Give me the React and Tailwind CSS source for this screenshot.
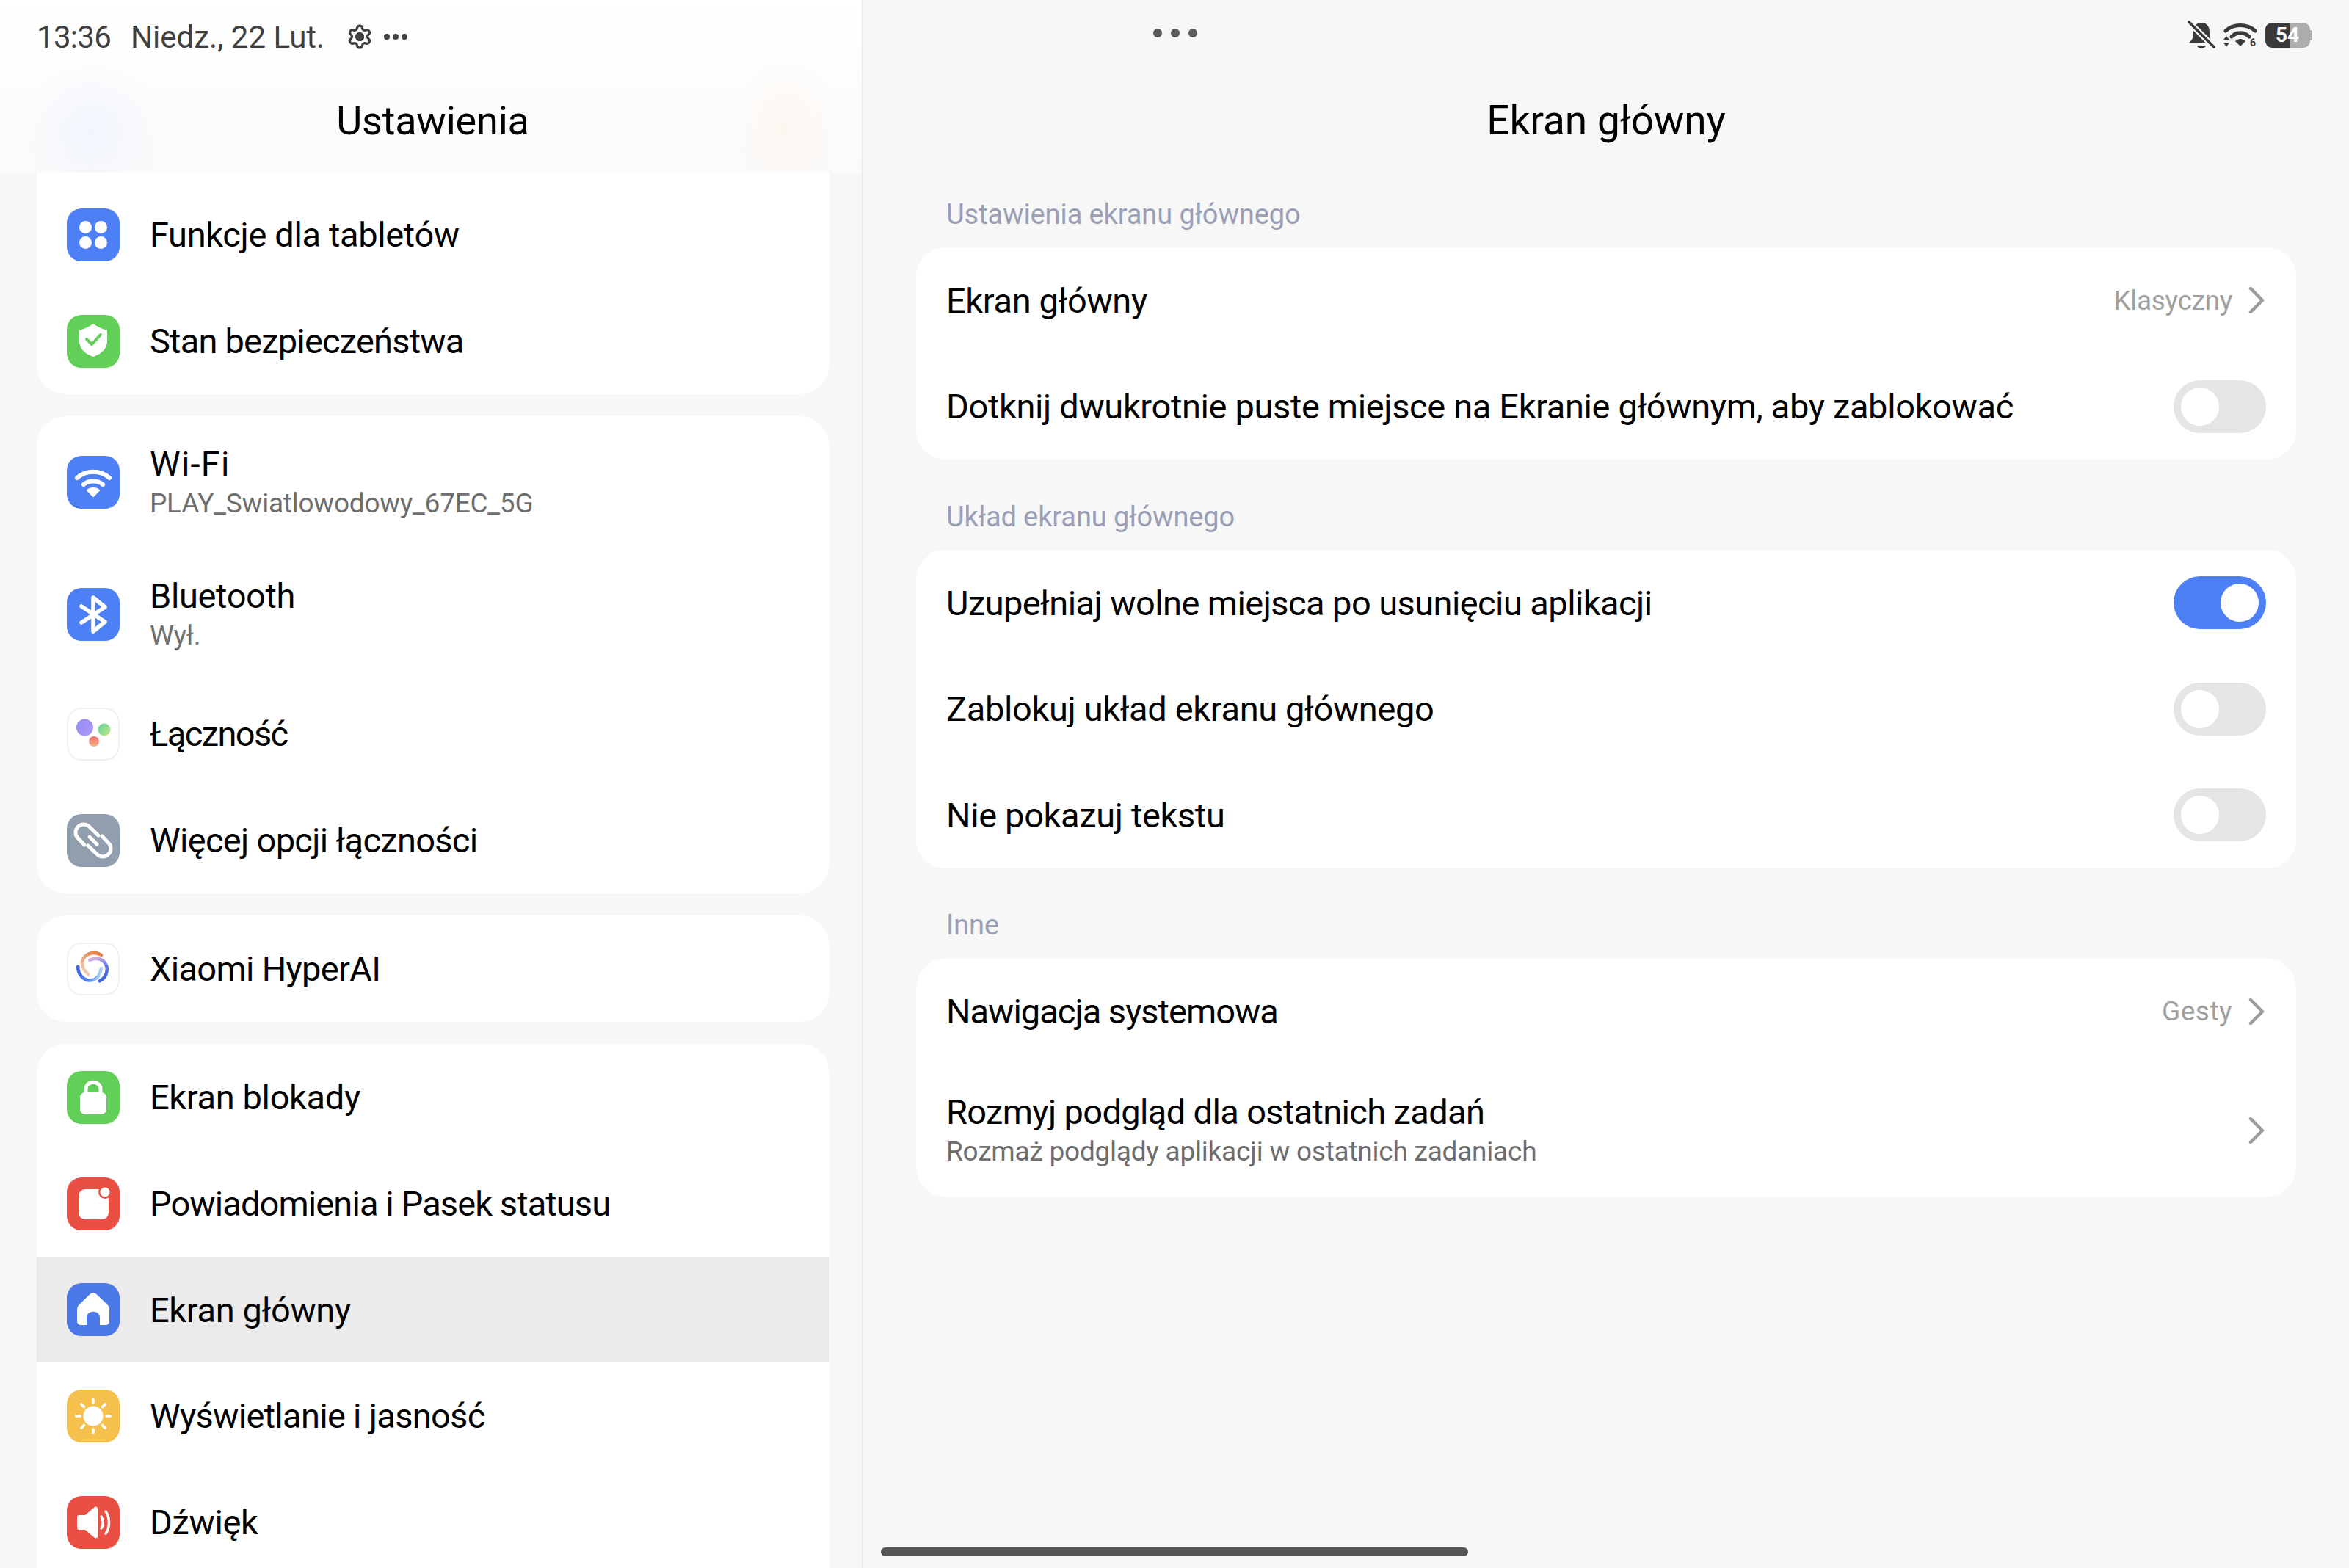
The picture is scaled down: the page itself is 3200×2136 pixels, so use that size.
import React from 'react';
import { Settings } from 'lucide-react';

const font = 'font-["Roboto","Noto_Sans",sans-serif]';

function Tile({ bg, children, bordered }) {
  return (
    <div className={`w-[72px] h-[72px] shrink-0 rounded-[20px] flex items-center justify-center ${bg} ${bordered ? 'border-2 border-[#f1f1f1]' : ''}`}>
      <svg width="72" height="72" viewBox="0 0 72 72" fill="none" className="shrink-0">{children}</svg>
    </div>
  );
}

const blade = 'M47 17 C38 11 24 14 21 26 C20 33 24 39 29 43';

const icons = {
  apps: (
    <Tile bg="bg-[#4d80f5]">
      <rect x="17" y="17" width="17" height="17" rx="8.5" fill="#fff" />
      <rect x="38" y="17" width="17" height="17" rx="8.5" fill="#fff" />
      <rect x="17" y="38" width="17" height="17" rx="8.5" fill="#fff" />
      <rect x="38" y="38" width="17" height="17" rx="8.5" fill="#fff" />
    </Tile>
  ),
  shield: (
    <Tile bg="bg-[#62cf59]">
      <path d="M36 12 C41 16 48 19 55 21 V36 C55 47 45 54 36 57 C27 54 17 47 17 36 V21 C24 19 31 16 36 12 Z" fill="#fff" />
      <path d="M27 33 L34 40 L46 27" stroke="#62cf59" strokeWidth="4" strokeLinecap="round" strokeLinejoin="round" />
    </Tile>
  ),
  wifi: (
    <Tile bg="bg-[#4d80f5]">
      <path d="M14 30 C26 19 46 19 58 30" stroke="#fff" strokeWidth="6" strokeLinecap="round" />
      <path d="M23 39 C30 33 42 33 49 39" stroke="#fff" strokeWidth="6" strokeLinecap="round" />
      <path d="M36 55 L28 47 C32 43 40 43 44 47 Z" fill="#fff" stroke="#fff" strokeWidth="2" strokeLinejoin="round" />
    </Tile>
  ),
  bluetooth: (
    <Tile bg="bg-[#4d80f5]">
      <path d="M20 25 L52 46 L36 59 V13 L52 26 L20 47" stroke="#fff" strokeWidth="5.5" strokeLinecap="round" strokeLinejoin="round" />
    </Tile>
  ),
  dots: (
    <Tile bg="bg-white" bordered>
      <defs>
        <linearGradient id="dotA" x1="0" y1="0" x2="1" y2="1"><stop offset="0" stopColor="#8f8cf6" /><stop offset="1" stopColor="#b39af5" /></linearGradient>
        <linearGradient id="dotB" x1="0" y1="0" x2="1" y2="1"><stop offset="0" stopColor="#5fd3a0" /><stop offset="1" stopColor="#c5e77f" /></linearGradient>
        <linearGradient id="dotC" x1="0" y1="0" x2="0" y2="1"><stop offset="0" stopColor="#f0686f" /><stop offset="1" stopColor="#f5b77c" /></linearGradient>
      </defs>
      <circle cx="24.5" cy="27" r="11.5" fill="url(#dotA)" />
      <circle cx="51" cy="30" r="8.5" fill="url(#dotB)" />
      <circle cx="37" cy="46" r="7" fill="url(#dotC)" />
    </Tile>
  ),
  link: (
    <Tile bg="bg-[#919eae]">
      <path d="M24 42 L15.2 32.8 A11 11 0 0 1 30.8 17.2 L43 29" stroke="#fff" strokeWidth="5" strokeLinecap="round" />
      <path d="M48 30 L56.8 39.2 A11 11 0 0 1 41.2 54.8 L29 43" stroke="#fff" strokeWidth="5" strokeLinecap="round" />
      <path d="M31 31 L41 41" stroke="#fff" strokeWidth="5" strokeLinecap="round" />
    </Tile>
  ),
  hyper: (
    <Tile bg="bg-white" bordered>
      <defs>
        <linearGradient id="bladeA" x1="1" y1="0" x2="0.3" y2="1"><stop offset="0" stopColor="#e0773c" /><stop offset="0.5" stopColor="#e9a06e" /><stop offset="1" stopColor="#f3cdb0" /></linearGradient>
        <linearGradient id="bladeB" x1="1" y1="0" x2="0.3" y2="1"><stop offset="0" stopColor="#3f5fe0" /><stop offset="0.55" stopColor="#5f78e8" /><stop offset="1" stopColor="#d4aed8" /></linearGradient>
        <linearGradient id="bladeC" x1="1" y1="0" x2="0.3" y2="1"><stop offset="0" stopColor="#3f5fe0" /><stop offset="0.55" stopColor="#4f86ec" /><stop offset="1" stopColor="#a9d4f7" /></linearGradient>
      </defs>
      <path d={blade} stroke="url(#bladeA)" strokeWidth="4.5" strokeLinecap="round" />
      <path d={blade} stroke="url(#bladeB)" strokeWidth="4.5" strokeLinecap="round" transform="rotate(120 35.7 34)" />
      <path d={blade} stroke="url(#bladeC)" strokeWidth="4.5" strokeLinecap="round" transform="rotate(240 35.7 34)" />
    </Tile>
  ),
  lock: (
    <Tile bg="bg-[#62cf59]">
      <path d="M26 32 V25 C26 12 46 12 46 25 V32" stroke="#fff" strokeWidth="5" />
      <rect x="18" y="29" width="36" height="30" rx="7" fill="#fff" />
    </Tile>
  ),
  notify: (
    <Tile bg="bg-[#e94f43]">
      <rect x="16" y="16" width="41" height="41" rx="9" fill="#fff" />
      <circle cx="52" cy="20" r="9" fill="#e94f43" />
      <circle cx="52" cy="20" r="6.5" fill="#fff" />
    </Tile>
  ),
  home: (
    <Tile bg="bg-[#4a78e6]">
      <path d="M36 13 C38 13 39 14 41 15.5 L55 29 C57 31 58 33 58 36 V51 C58 55 56 57 52 57 H45 V47 C45 36 27 36 27 47 V57 H20 C16 57 14 55 14 51 V36 C14 33 15 31 17 29 L31 15.5 C33 14 34 13 36 13 Z" fill="#fff" />
    </Tile>
  ),
  sun: (
    <Tile bg="bg-[#f5c04b]">
      <circle cx="36" cy="36" r="13.5" fill="#fff" />
      <path d="M36 13 V18 M36 54 V59 M13 36 H18 M54 36 H59 M20 20 L23.5 23.5 M48.5 48.5 L52 52 M52 20 L48.5 23.5 M23.5 48.5 L20 52" stroke="#fff" strokeWidth="3.6" strokeLinecap="round" />
    </Tile>
  ),
  sound: (
    <Tile bg="bg-[#e94f43]">
      <path d="M14 29 C14 27 15 26 17 26 H25 L38 15 C40 14 42 15 42 17 V55 C42 57 40 58 38 57 L25 46 H17 C15 46 14 45 14 43 Z" fill="#fff" />
      <path d="M47 28 C50 32 50 40 47 44" stroke="#fff" strokeWidth="3.5" strokeLinecap="round" />
      <path d="M53 21 C59 29 59 43 53 51" stroke="#fff" strokeWidth="3.5" strokeLinecap="round" />
    </Tile>
  ),
};

function RowText({ title, sub, track = 'tracking-[-0.36px]' }) {
  return (
    <div className={`flex flex-col ${sub ? 'pt-[2px]' : 'pt-[1px]'}`}>
      <div className={`text-[47px] leading-[56px] text-black ${track}`}>{title}</div>
      {sub && <div className="text-[37px] tracking-[-0.23px] leading-[52px] text-[#6e6e6e]">{sub}</div>}
    </div>
  );
}

function MenuRow({ icon, title, sub, active, tall, track }) {
  return (
    <div className={`flex items-center pl-[41px] gap-[41px] ${tall ? 'h-[180px]' : active ? 'h-[144px]' : 'h-[145px]'} ${active ? 'bg-[#ebebeb]' : ''}`}>
      {icons[icon]}
      <RowText title={title} sub={sub} track={track} />
    </div>
  );
}

function Toggle({ on }) {
  return (
    <div className={`w-[126px] h-[72px] rounded-full p-[10px] flex ${on ? 'bg-[#4d80f5] justify-end' : 'bg-[#e5e5e5] justify-start'}`}>
      <div className="w-[52px] h-[52px] rounded-full bg-white" />
    </div>
  );
}

function Chevron() {
  return (
    <svg width="22" height="36" viewBox="0 0 22 36" fill="none" className="shrink-0">
      <path d="M3 2 L19 18 L3 34" stroke="#9c9c9c" strokeWidth="4.5" strokeLinecap="round" strokeLinejoin="round" />
    </svg>
  );
}

function SettingRow({ title, sub, value, valueTrack = 'tracking-[-0.3px]', toggle, chevron, tall, track }) {
  return (
    <div className={`flex items-center justify-between pl-[41px] ${chevron ? 'pr-[43px]' : 'pr-[41px]'} ${tall ? 'h-[180px]' : 'h-[144.5px]'}`}>
      <RowText title={title} sub={sub} track={track} />
      <div className="flex items-center gap-[22px]">
        {value && <span className={`text-[37px] text-[#a0a0a0] ${valueTrack}`}>{value}</span>}
        {chevron && <Chevron />}
        {toggle !== undefined && <Toggle on={toggle} />}
      </div>
    </div>
  );
}

function SectionLabel({ children }) {
  return <div className="h-[90px] flex items-center pl-[41px] text-[38px] tracking-[-0.1px] text-[#9a9fb8]">{children}</div>;
}

function StatusIcons() {
  return (
    <div className="flex items-center gap-[11px]">
      <svg width="38" height="40" viewBox="0 0 38 40" fill="none">
        <path d="M19 3 C11 3 8 9 8 16 V23 L2 31 H34 L30 23 V16 C30 9 27 3 19 3 Z" fill="#3a3a3a" />
        <path d="M13 34 C14 39 24 39 25 34 Z" fill="#3a3a3a" />
        <path d="M0 0 L38 38" stroke="#f7f7f7" strokeWidth="8" />
        <path d="M2 2 L36 36" stroke="#3a3a3a" strokeWidth="3.6" strokeLinecap="round" />
      </svg>
      <div className="relative w-[46px] h-[36px]">
        <svg width="46" height="36" viewBox="0 0 46 36" fill="none">
          <path d="M3 12 C14 2 32 2 43 12" stroke="#3a3a3a" strokeWidth="5" strokeLinecap="round" />
          <path d="M11 20 C18 13 28 13 35 20" stroke="#3a3a3a" strokeWidth="5" strokeLinecap="round" />
          <path d="M23 33 L16 26 C20 22 26 22 30 26 Z" fill="#3a3a3a" />
          <path d="M4 19 L8 24 H0 Z M4 34 L8 28 H0 Z" fill="#3a3a3a" />
        </svg>
        <span className="absolute right-[2px] bottom-[1px] text-[14px] leading-[14px] font-bold text-[#3a3a3a]">6</span>
      </div>
      <div className="relative w-[64px] h-[34px] flex">
        <div className="w-[34px] h-full bg-[#3a3a3a] rounded-l-[9px]" />
        <div className="w-[27px] h-full bg-[#adadad] rounded-r-[9px]" />
        <div className="w-[3px] h-[14px] self-center bg-[#adadad] rounded-r-[2px]" />
        <span className="absolute left-[14px] top-0 h-[34px] leading-[34px] text-[28px] font-bold text-white">54</span>
      </div>
    </div>
  );
}

export default function App() {
  return (
    <div className={`w-[3200px] h-[2136px] overflow-hidden flex bg-[#f7f7f7] ${font}`}>
      <div className="w-[1176px] shrink-0 h-full overflow-hidden border-r-2 border-[#e6e6e6]">
        <div className="h-[235px] bg-[radial-gradient(circle_at_125px_178px,#f1f5fd_0,transparent_95px),radial-gradient(ellipse_70px_100px_at_1070px_175px,#fdf6f0_0,transparent_100%),linear-gradient(#ffffff,#fafafa)]">
          <div className="h-[100px] flex items-center pl-[50px] text-[42px] text-[#3f3f3f]">
            <span className="tracking-[-0.7px]">13:36</span>
            <span className="ml-[27px]">Niedz., 22 Lut.</span>
            <div className="relative ml-[30px] w-[36px] h-[36px] flex items-center justify-center">
              <Settings size={36} strokeWidth={2.2} />
              <div className="absolute w-[11px] h-[11px] rounded-full bg-[#3f3f3f]" />
            </div>
            <div className="ml-[15px] flex gap-[4px]">
              <div className="w-[8px] h-[8px] rounded-full bg-[#3f3f3f]" />
              <div className="w-[8px] h-[8px] rounded-full bg-[#3f3f3f]" />
              <div className="w-[8px] h-[8px] rounded-full bg-[#3f3f3f]" />
            </div>
          </div>
          <div className="h-[128px] pl-[5px] flex items-center justify-center text-[54px] tracking-[-0.2px] text-black">Ustawienia</div>
        </div>
        <div className="pl-[50px] pr-[44px] flex flex-col gap-[30px]">
          <div className="bg-white rounded-b-[40px] pt-[12px] overflow-hidden">
            <MenuRow icon="apps" title="Funkcje dla tabletów" />
            <MenuRow icon="shield" title="Stan bezpieczeństwa" track="tracking-[-0.8px]" />
          </div>
          <div className="bg-white rounded-[40px] overflow-hidden">
            <MenuRow icon="wifi" title="Wi-Fi" sub="PLAY_Swiatlowodowy_67EC_5G" tall track="tracking-[1.2px]" />
            <MenuRow icon="bluetooth" title="Bluetooth" sub="Wył." tall />
            <MenuRow icon="dots" title="Łączność" track="tracking-[-1.6px]" />
            <MenuRow icon="link" title="Więcej opcji łączności" track="tracking-[-0.7px]" />
          </div>
          <div className="bg-white rounded-[40px] overflow-hidden">
            <MenuRow icon="hyper" title="Xiaomi HyperAI" track="tracking-[-0.7px]" />
          </div>
          <div className="bg-white rounded-t-[40px] overflow-hidden">
            <MenuRow icon="lock" title="Ekran blokady" />
            <MenuRow icon="notify" title="Powiadomienia i Pasek statusu" track="tracking-[-0.9px]" />
            <MenuRow icon="home" title="Ekran główny" active />
            <MenuRow icon="sun" title="Wyświetlanie i jasność" track="tracking-[-0.7px]" />
            <MenuRow icon="sound" title="Dźwięk" />
          </div>
        </div>
      </div>

      <div className="relative flex-1 h-full">
        <div className="relative h-[94px]">
          <div className="absolute left-[395px] top-[39px] flex gap-[12px]">
            <div className="w-[12px] h-[12px] rounded-full bg-[#5a5a5a]" />
            <div className="w-[12px] h-[12px] rounded-full bg-[#5a5a5a]" />
            <div className="w-[12px] h-[12px] rounded-full bg-[#5a5a5a]" />
          </div>
          <div className="absolute right-[50px] top-[28px]">
            <StatusIcons />
          </div>
        </div>
        <div className="h-[140px] flex items-center justify-center text-[55px] text-black">Ekran główny</div>
        <div className="pt-[13px] pl-[72px] pr-[72px]">
          <SectionLabel>Ustawienia ekranu głównego</SectionLabel>
          <div className="bg-white rounded-[40px]">
            <SettingRow title="Ekran główny" value="Klasyczny" chevron />
            <SettingRow title="Dotknij dwukrotnie puste miejsce na Ekranie głównym, aby zablokować" toggle={false} />
          </div>
          <div className="mt-[33px]">
            <SectionLabel>Układ ekranu głównego</SectionLabel>
          </div>
          <div className="bg-white rounded-[40px]">
            <SettingRow title="Uzupełniaj wolne miejsca po usunięciu aplikacji" toggle track="tracking-[-0.58px]" />
            <SettingRow title="Zablokuj układ ekranu głównego" toggle={false} />
            <SettingRow title="Nie pokazuj tekstu" toggle={false} />
          </div>
          <div className="mt-[33px]">
            <SectionLabel>Inne</SectionLabel>
          </div>
          <div className="bg-white rounded-[40px]">
            <SettingRow title="Nawigacja systemowa" value="Gesty" valueTrack="tracking-[0.5px]" chevron track="tracking-[-1px]" />
            <SettingRow title="Rozmyj podgląd dla ostatnich zadań" sub="Rozmaż podglądy aplikacji w ostatnich zadaniach" chevron tall track="tracking-[-0.65px]" />
          </div>
        </div>
        <div className="absolute left-[24px] top-[2108px] w-[800px] h-[12px] rounded-full bg-[#555555]" />
      </div>
    </div>
  );
}
